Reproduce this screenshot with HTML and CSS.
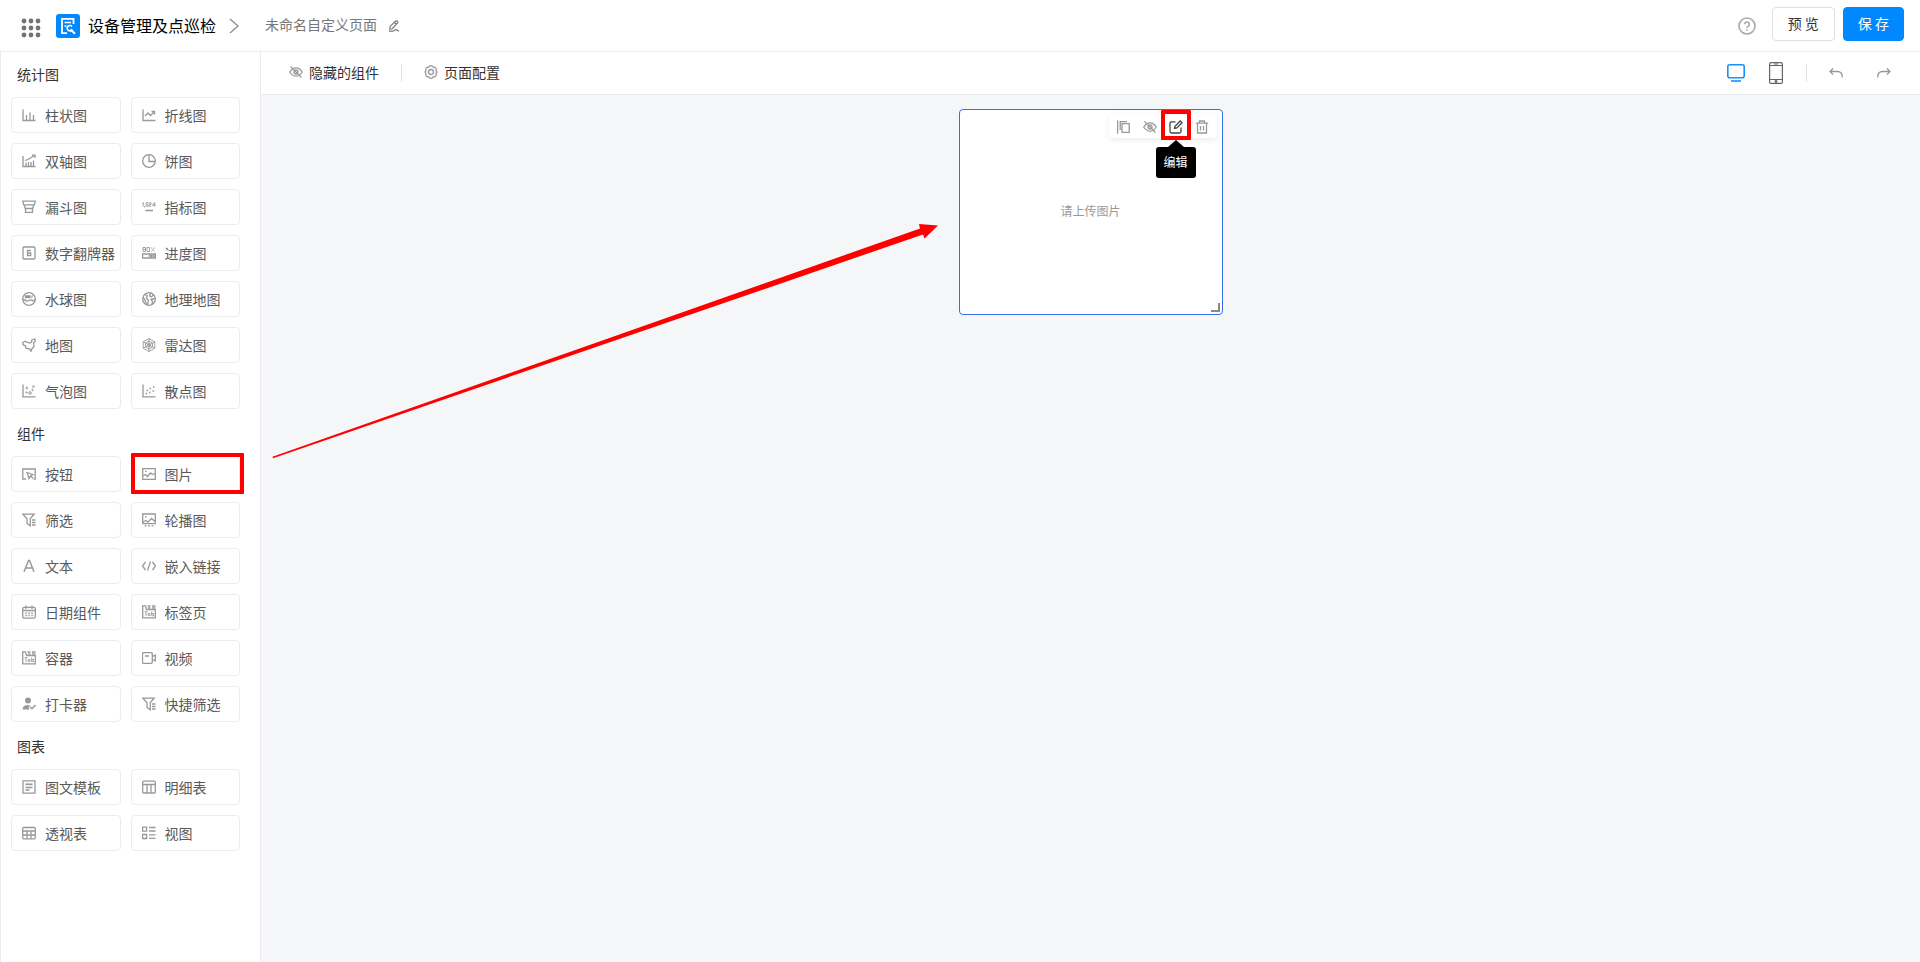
FILE: index.html
```html
<!DOCTYPE html>
<html lang="zh-CN">
<head>
<meta charset="utf-8">
<title>未命名自定义页面</title>
<link rel="stylesheet" href="styles.css">
</head>
<body>
<div class="app">
  <header class="header">
    <button class="icon-btn apps" aria-label="应用">
      <svg width="20" height="20" viewBox="0 0 20 20" fill="#737373"><circle cx="3" cy="3" r="2.4"/><circle cx="10" cy="3" r="2.4"/><circle cx="17" cy="3" r="2.4"/><circle cx="3" cy="10" r="2.4"/><circle cx="10" cy="10" r="2.4"/><circle cx="17" cy="10" r="2.4"/><circle cx="3" cy="17" r="2.4"/><circle cx="10" cy="17" r="2.4"/><circle cx="17" cy="17" r="2.4"/></svg>
    </button>
    <svg class="logo" width="24" height="24" viewBox="0 0 24 24"><rect width="24" height="24" rx="3" fill="#0089ff"/><g fill="none" stroke="#fff"><path d="M11 19.200H6V4.800H17.500V10" stroke-width="1.800"/><path d="M8.500 8.500h6.500M8.500 12h2" stroke-width="1.300"/><path d="M16 12.500A2.700 2.700 0 1 0 16.300 15.500" stroke-width="1.700"/><path d="M14.500 15.500l4.500 4.300" stroke-width="2"/></g></svg>
    <span class="app-name">设备管理及点巡检</span>
    <svg class="crumb-arrow" width="10" height="16" viewBox="0 0 10 16" fill="none" stroke="#8c8c8c" stroke-width="1.300"><path d="M1 1l8 7-8 7"/></svg>
    <span class="page-name">未命名自定义页面</span>
    <button class="icon-btn" aria-label="重命名">
      <svg width="12" height="12" viewBox="0 0 14 14" fill="none" stroke="#777" stroke-width="1.400"><path d="M2 10.500l.5-3L9 1.200q1-.7 2 .2t.2 2L5 10.200zM7.500 2.800l2.300 2.200M1 13h4.500c2 0 2-1.700 3.500-1.700s1.500 1.400 4 1.400"/></svg>
    </button>
    <div class="header-actions">
      <button class="icon-btn" aria-label="帮助">
        <svg width="18" height="18" viewBox="0 0 18 18" fill="none" stroke="#aaa" stroke-width="1.600"><circle cx="9" cy="9" r="8"/><path d="M6.700 7.200a2.300 2.200 0 1 1 3.500 1.900q-1.200.7-1.200 1.900M9 12.200v1.500"/></svg>
      </button>
      <button class="btn">预 览</button>
      <button class="btn btn-primary">保 存</button>
    </div>
  </header>

  <div class="body">
    <aside class="sidebar">
      <section class="group">
        <h2 class="group-title">统计图</h2>
        <div class="grid">
          <button class="item"><svg class="ico" viewBox="0 0 14 14"><path d="M1 1.500V12.500H13.500M4.500 12V7M8 12V4.500M11.500 12V7"/></svg>柱状图</button>
          <button class="item"><svg class="ico" viewBox="0 0 14 14"><path d="M1 1.500V12.500H13.500M3 8l3-3 2.500 2.500L12.500 3.800M9.500 3.500h3V6.500"/></svg>折线图</button>
          <button class="item"><svg class="ico" viewBox="0 0 14 14"><path d="M1 2V12.500H13.500M4 12V8.500M6.500 12V8M9 12V8M11.500 12V6.500M3 6.500l3-1 6.500-4M10 1.200h3V4"/></svg>双轴图</button>
          <button class="item"><svg class="ico" viewBox="0 0 14 14"><circle cx="7" cy="7" r="6.300"/><path d="M7 .7V7.500H13.300"/></svg>饼图</button>
          <button class="item"><svg class="ico" viewBox="0 0 14 14"><path d="M.7 1.200H13.300L12.300 4.800H1.700zM2.300 5L3.300 8.500H10.700L11.700 5M3.500 8.500V12.300H10.500V8.500"/></svg>漏斗图</button>
          <button class="item"><svg class="ico" viewBox="0 0 14 14"><path stroke-width=".9" d="M.2 3.500L1.200 2.500V6.500M2.500 6v1.500M4 2.700h2v3.600H4zM7 2.700h2V4.500H7.200V6.300h2M12.700 6.500V2.500L10.300 5.300H13.800"/><path stroke-width="1.600" d="M3.500 10.500h7.500"/></svg>指标图</button>
          <button class="item"><svg class="ico" viewBox="0 0 14 14"><rect x="1" y="1" width="12" height="12" rx="1"/><path d="M9 4.500H5.500V9.500H8.700V7H5.500"/></svg>数字翻牌器</button>
          <button class="item"><svg class="ico" viewBox="0 0 14 14"><path stroke-width=".9" d="M1 1.500h2.500v4H1zM1 3.500h2.500M5 1.500h2.500v4H5zM12.500 1.500l-3 4M9 2h1.200M11.500 5.200h1.200"/><path d="M.6 8H13.400V12H.6zM6.500 10H13M9.500 8v4"/></svg>进度图</button>
          <button class="item"><svg class="ico" viewBox="0 0 14 14"><circle cx="7" cy="7" r="6.300"/><path d="M1 7.500q1.500 0 2.500 1t3.500 0 3.500 0T13 7.500M3.500 4h2v1.500h-2zM6.500 4h1.500v1.500H6.500zM10.500 3.500L9.500 5.500"/></svg>水球图</button>
          <button class="item"><svg class="ico" viewBox="0 0 14 14"><circle cx="7" cy="7" r="6.300"/><path d="M3 2.500L5.200 3.500 4.500 6 6.500 8.500 5.500 13M1 5.500L3 8l1.500 4.500M8.500 1L7.500 4l2 1 2-2.500M13 6.500L9 7.500l1.500 2L10 12.500"/></svg>地理地图</button>
          <button class="item"><svg class="ico" viewBox="0 0 14 14"><path d="M.8 4.500L3 3.200 5 4.200 7.500 5 9.500 4.300 9.800 2 13 1 13.300 3.200 11.500 4.800 12 8.500 10 10.700 9 13.300 7.800 11 4 10.200 3.500 8 1 6.500z"/></svg>地图</button>
          <button class="item"><svg class="ico" viewBox="0 0 14 14"><path stroke-width=".9" d="M7 .5L12.800 3.800V10.200L7 13.500 1.200 10.200V3.800zM7 3L10.500 5V9L7 11 3.500 9V5zM7 .5V13.500M1.200 3.800L12.800 10.200M12.800 3.800L1.200 10.200M7 5.300l1.500.9v1.700L7 8.700l-1.500-.8V6.200z"/></svg>雷达图</button>
          <button class="item"><svg class="ico" viewBox="0 0 14 14"><path d="M1 .5V12.800H13.500"/><g stroke-width="1"><circle cx="4.800" cy="4" r=".9"/><circle cx="8" cy="9" r="1.300"/><circle cx="11.500" cy="2.500" r=".9"/><circle cx="10.500" cy="6" r=".7"/><circle cx="4.500" cy="8.500" r=".7"/></g></svg>气泡图</button>
          <button class="item"><svg class="ico" viewBox="0 0 14 14"><path d="M1 .5V12.800H13.500"/><path stroke-width="1.600" d="M3.500 9.500h1.600M4.500 6.500h1.600M7 8.500h1.600M7.500 4.500h1.600M10.500 7h1.600M11 3h1.600"/></svg>散点图</button>
        </div>
      </section>

      <section class="group">
        <h2 class="group-title">组件</h2>
        <div class="grid">
          <button class="item"><svg class="ico" viewBox="0 0 14 14"><path d="M4 12H.8V2H13.200V12H11.500M5 5.500l6 2-2.500 1.200L7 11.500zM8.500 8.700l2.500 2.800"/></svg>按钮</button>
          <button class="item item-marked"><svg class="ico" viewBox="0 0 14 14"><path d="M.7 1.700H13.300V12.300H.7zM1 9L3.500 7.500l2 2L8.500 6l2 1.500L13 6.500M3 4.300h1.600"/></svg>图片</button>
          <button class="item"><svg class="ico" viewBox="0 0 14 14"><path d="M.8 1.200H12.200L8.300 5.500V12.800L5 10.500V5.500zM10 7h3.500M10 9.500h3.500M10 12h3.500"/></svg>筛选</button>
          <button class="item"><svg class="ico" viewBox="0 0 14 14"><path d="M.7 1H13.300V10.700H.7zM1 9l3-1.500 2 1.700L9.500 5.500 13 8.500M3 3.800h1.600M2.500 12.800h2M6 12.800h2M9.500 12.800h2"/></svg>轮播图</button>
          <button class="item"><svg class="ico" viewBox="0 0 14 14"><path stroke-width="1.500" d="M2 12.800L6.500 1.500h1L12 12.800M3.700 9h6.600"/></svg>文本</button>
          <button class="item"><svg class="ico" viewBox="0 0 14 14"><path stroke-width="1.300" d="M3.500 3L.5 7l3 4M10.500 3l3 4-3 4M8.500 2.500l-3 9"/></svg>嵌入链接</button>
          <button class="item"><svg class="ico" viewBox="0 0 14 14"><rect x=".7" y="2.300" width="12.600" height="10.900" rx="1.500"/><path d="M4 .5V4M10 .5V4M1 5.500H13M3.300 8h1.500M6.300 8h1.500M9.300 8h1.500M3.300 10.500h1.500M6.300 10.500h1.500M9.300 10.500h1.500"/></svg>日期组件</button>
          <button class="item"><svg class="ico" viewBox="0 0 14 14"><path d="M.7 .8V12.800H13.300V4.500H4.500L3.500 .8zM5.500 1H8.500M10 1H13.500M6 2.900H8.500M10 2.900H13.500"/><path stroke-width=".9" d="M2.500 6.700H5.500M4 6.700V11M6.200 8.500H8V10.700H6.200zM9.700 6.500V10.700H11.500V8.500H9.700"/></svg>标签页</button>
          <button class="item"><svg class="ico" viewBox="0 0 14 14"><path d="M.7 .8V12.800H13.300V4.500H4.500L3.500 .8zM5.500 1H8.500M10 1H13.500M6 2.900H8.500M10 2.900H13.500"/><path stroke-width=".9" d="M2.500 6.700H5.500M4 6.700V11M6.200 8.500H8V10.700H6.200zM9.700 6.500V10.700H11.500V8.500H9.700"/></svg>容器</button>
          <button class="item"><svg class="ico" viewBox="0 0 14 14"><rect x=".5" y="1.700" width="9.800" height="10.600" rx="1"/><path d="M3 5h4M10.500 5.500l2.800-1.500v6l-2.800-1.500"/></svg>视频</button>
          <button class="item"><svg class="ico" viewBox="0 0 14 14"><circle cx="6" cy="3.500" r="3" fill="#999" stroke="none"/><path fill="#999" stroke="none" d="M.5 12.500Q.5 8 6 8L8.500 8.500 6.500 10l1 2.500z"/><path stroke-width="1.500" d="M8 9.700l2 2L13.500 8"/></svg>打卡器</button>
          <button class="item"><svg class="ico" viewBox="0 0 14 14"><path d="M.8 1.200H12.200L8.300 5.500V12.800L5 10.500V5.500zM10 7h3.500M10 9.500h3.500M10 12h3.500"/></svg>快捷筛选</button>
        </div>
      </section>

      <section class="group">
        <h2 class="group-title">图表</h2>
        <div class="grid">
          <button class="item"><svg class="ico" viewBox="0 0 14 14"><path d="M1 .8H13V13.200H1z"/><path stroke-width="1.800" d="M3.500 4.300h7"/><path d="M3.500 7.500h7M3.500 10h4"/></svg>图文模板</button>
          <button class="item"><svg class="ico" viewBox="0 0 14 14"><rect x=".7" y="1.200" width="12.600" height="11.800" rx="1"/><path d="M1 4.500H13M5 4.500V13M9 4.500V13"/></svg>明细表</button>
          <button class="item"><svg class="ico" viewBox="0 0 14 14"><rect x=".7" y="1.500" width="12.600" height="11.300" rx="1"/><path d="M1 5H13M1 9H13M5 5V13M9 5V13"/></svg>透视表</button>
          <button class="item"><svg class="ico" viewBox="0 0 14 14"><path d="M.6 1.200h4v4h-4zM.6 8.500h4v4h-4zM7 1.500h6.500M7 5h6.500M7 8.800h6.500M7 12.300h6.500"/></svg>视图</button>
        </div>
      </section>
    </aside>

    <main class="main">
      <div class="toolbar">
        <button class="tool">
          <svg class="ico" viewBox="0 0 14 14"><path d="M.7 7Q3.500 2.800 7 2.800T13.300 7Q10.500 11.200 7 11.200T.7 7zM1.500 1.500L12.500 12.500"/><circle cx="7" cy="7" r="2"/></svg>隐藏的组件
        </button>
        <span class="divider"></span>
        <button class="tool">
          <svg class="ico" viewBox="0 0 14 14"><path d="M5.500 1.200Q7 .2 8.500 1.200L9.300 2.300 10.800 2.200Q12.300 3 12.300 4.500L12 5.700 13 7 12 8.300 12.300 9.500Q12.300 11 10.800 11.800L9.300 11.700 8.500 12.800Q7 13.800 5.500 12.800L4.700 11.700 3.200 11.800Q1.700 11 1.700 9.500L2 8.300 1 7 2 5.700 1.700 4.500Q1.700 3 3.200 2.200L4.700 2.300z"/><circle cx="7" cy="7" r="2.500"/></svg>页面配置
        </button>
        <div class="toolbar-right">
          <button class="icon-btn" aria-label="电脑端">
            <svg width="18" height="18" viewBox="0 0 18 18" fill="none" stroke="#1890ff" stroke-width="1.600"><rect x=".8" y=".8" width="16.400" height="13" rx="2"/><path d="M4 17h10"/></svg>
          </button>
          <button class="icon-btn phone" aria-label="移动端">
            <svg width="14" height="22" viewBox="0 0 14 22" fill="none" stroke="#666" stroke-width="1.200"><rect x=".6" y=".6" width="12.800" height="20.800" rx="1.500"/><path d="M1 3.500H13M1 17.500H13M5 2h4"/><circle cx="7" cy="19.500" r=".8" fill="#666"/></svg>
          </button>
          <span class="divider"></span>
          <button class="icon-btn" aria-label="撤销">
            <svg width="14" height="10" viewBox="0 0 14 10" fill="none" stroke="#999" stroke-width="1.300"><path d="M4 .5L1 3.500l3 3M1 3.500h7.500Q13.300 3.500 13.300 9.500"/></svg>
          </button>
          <button class="icon-btn redo" aria-label="重做">
            <svg width="14" height="10" viewBox="0 0 14 10" fill="none" stroke="#999" stroke-width="1.300"><path d="M10 .5l3 3-3 3M13 3.500H5.500Q.7 3.500 .7 9.500"/></svg>
          </button>
        </div>
      </div>

      <div class="canvas">
        <svg class="arrow" width="680" height="370" viewBox="0 0 680 370" fill="#f00"><path d="M11.500 361.800L659 133.500 658 129 677 130.500 663.500 143.500 662 139.500 12 363.200z"/></svg>
        <div class="widget">
          <p class="placeholder">请上传图片</p>
          <div class="widget-tools">
            <button class="icon-btn" aria-label="复制"><svg class="ico" viewBox="0 0 14 14"><path d="M.6 .3V13.700M3.200 10V1.700H10M5 3.700H12.200V12.300H5z"/></svg></button>
            <button class="icon-btn" aria-label="隐藏"><svg class="ico" viewBox="0 0 14 14"><path d="M.7 7Q3.500 2.800 7 2.800T13.300 7Q10.500 11.200 7 11.200T.7 7zM1.500 1.500L12.500 12.500"/><circle cx="7" cy="7" r="2"/></svg></button>
            <button class="icon-btn edit" aria-label="编辑"><svg class="ico ico-dark" viewBox="0 0 14 14"><path d="M6.500 1.800H2.500Q1 1.800 1 3.300V11.500Q1 13 2.500 13H10.500Q12 13 12 11.500V7.500M5.500 8.500L6 6.200 11.200 1 13 2.800 7.800 8z"/></svg><span class="tip" role="tooltip">编辑</span></button>
            <button class="icon-btn" aria-label="删除"><svg class="ico" viewBox="0 0 14 14"><path d="M.8 3.200H13.200M4.500 3V1H9.500V3M2.500 3.500V13H11.500V3.500M5.500 6v4.500M8.500 6v4.500"/></svg></button>
          </div>
          <span class="resize"></span>
        </div>
      </div>
    </main>
  </div>
</div>
</body>
</html>
```
FILE: styles.css
```css
* { box-sizing: border-box; }

body {
  margin: 0;
  font-family: "Noto Sans CJK SC", "Liberation Sans", sans-serif;
  font-size: 14px;
  color: #333;
  background: #fff;
}

button {
  font: inherit;
  color: inherit;
  cursor: pointer;
}

.app {
  display: flex;
  flex-direction: column;
  min-height: 100vh;
}

.header {
  display: flex;
  align-items: center;
  height: 52px;
  padding: 0 16px 0 21px;
  border-bottom: 1px solid #ebecf0;
}

.icon-btn {
  display: flex;
  align-items: center;
  justify-content: center;
  padding: 0;
  border: 0;
  background: none;
}

.apps { padding-top: 4px; }
.logo { margin-left: 15px; }

.app-name {
  margin-left: 8px;
  padding-bottom: 2px;
  font-size: 16px;
  line-height: 24px;
  color: #000;
}

.crumb-arrow { margin: 0 26px 0 13px; }

.page-name {
  margin-right: 11px;
  padding-bottom: 3px;
  color: #777;
}

.header-actions {
  display: flex;
  align-items: center;
  gap: 8px;
  margin-left: auto;
  padding-bottom: 3px;
}

.header-actions .icon-btn {
  margin-right: 8px;
  padding-top: 4px;
}

.btn {
  height: 34px;
  padding: 0 15px 2px;
  border: 1px solid #dfe1e6;
  border-radius: 4px;
  background: #fff;
  line-height: 20px;
}

.btn-primary {
  padding: 0 14px 2px;
  border-color: #0089ff;
  background: #0089ff;
  color: #fff;
}

.body {
  display: flex;
  flex: 1;
}

.sidebar {
  flex: none;
  width: 261px;
  padding: 8px 20px 0 10px;
  border: solid #ebecf0;
  border-width: 0 1px;
}

.group { margin-bottom: 10px; }

.group-title {
  margin: 0 0 9px;
  padding-left: 6px;
  font-size: 14px;
  font-weight: 400;
  line-height: 28px;
}

.grid {
  display: grid;
  grid-template-columns: 1fr 1fr;
  gap: 10px;
}

.item {
  position: relative;
  display: flex;
  align-items: center;
  gap: 9px;
  height: 36px;
  padding: 0 0 0 10px;
  border: 1px solid #ebecf0;
  border-radius: 4px;
  background: #fff;
  color: #595959;
  white-space: nowrap;
}

.item-marked::after {
  content: "";
  position: absolute;
  inset: -4px -5px -3px -1px;
  border: 4px solid #f00;
  border-radius: 1px;
}

.ico {
  flex: none;
  width: 14px;
  height: 14px;
  fill: none;
  stroke: #999;
  stroke-width: 1.3;
}

.ico-dark { stroke: #444; }

.main {
  display: flex;
  flex: 1;
  flex-direction: column;
  min-width: 0;
}

.toolbar {
  display: flex;
  align-items: center;
  height: 43px;
  padding: 0 29px 0 28px;
  border-bottom: 1px solid #ebecf0;
}

.tool {
  display: flex;
  align-items: center;
  gap: 6px;
  padding: 0 0 2px;
  border: 0;
  background: none;
}

.divider {
  width: 1px;
  height: 18px;
  margin: 0 22px;
  background: #dfe1e6;
}

.toolbar-right {
  display: flex;
  align-items: center;
  margin-left: auto;
}

.toolbar-right .divider { margin-left: 23px; }
.phone { margin-left: 24px; }
.redo { margin-left: 34px; }

.canvas {
  position: relative;
  flex: 1;
  padding: 14px 16px;
  background: #f5f6f8;
}

.arrow {
  position: absolute;
  top: 0;
  left: 0;
}

.widget {
  position: relative;
  display: flex;
  align-items: center;
  justify-content: center;
  width: 264px;
  height: 206px;
  margin: 0 auto;
  border: 1px solid #3370e8;
  border-radius: 4px;
  background: #fff;
}

.placeholder {
  margin: 0;
  padding-bottom: 4px;
  font-size: 12px;
  color: #999;
}

.widget-tools {
  position: absolute;
  top: 4px;
  right: 5px;
  display: grid;
  grid-template-columns: repeat(4, 26px);
  justify-content: center;
  width: 108px;
  height: 24px;
  border-radius: 4px;
  background: #fff;
  box-shadow: 0 2px 6px rgba(0, 0, 0, .08);
}

.widget-tools .icon-btn { padding-top: 2px; }

.edit { position: relative; }

.edit::before {
  content: "";
  position: absolute;
  inset: -4px -2px -2px;
  border: 4px solid #f00;
  border-radius: 1px;
}

.tip {
  position: absolute;
  top: 33px;
  left: 50%;
  width: 40px;
  margin-left: -20px;
  padding-bottom: 2px;
  border-radius: 3px;
  background: #000;
  color: #fff;
  font-size: 12px;
  line-height: 29px;
}

.tip::before {
  content: "";
  position: absolute;
  top: -7px;
  left: 12px;
  border: solid transparent;
  border-width: 0 8px 7px;
  border-bottom-color: #000;
}

.resize {
  position: absolute;
  right: 2px;
  bottom: 2px;
  width: 9px;
  height: 9px;
  border: solid #888;
  border-width: 0 2px 2px 0;
}
```
